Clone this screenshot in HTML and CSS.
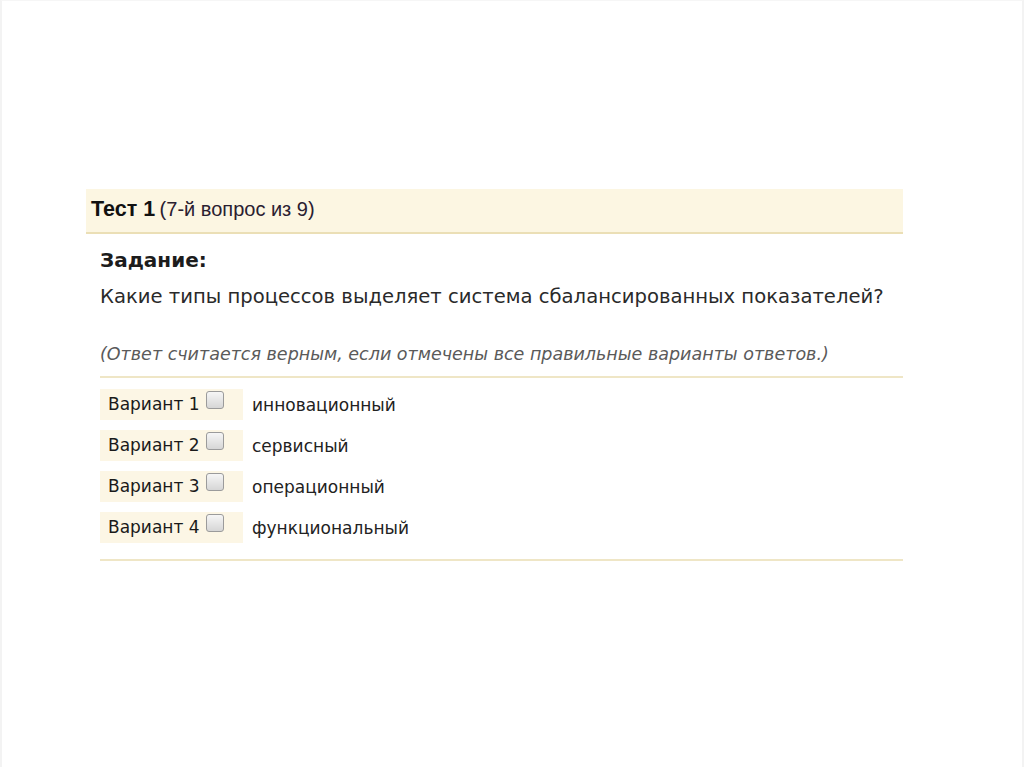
FILE: index.html
```html
<!DOCTYPE html>
<html lang="ru">
<head>
<meta charset="utf-8">
<title>Тест 1</title>
<link rel="stylesheet" href="styles.css">
</head>
<body>
<div class="frame">
  <div class="quiz">
    <div class="quiz-head"><b class="quiz-name">Тест 1</b> <span class="quiz-count">(7-й вопрос из 9)</span></div>
    <div class="quiz-body">
      <div class="task-title">Задание:</div>
      <div class="question">Какие типы процессов выделяет система сбалансированных показателей?</div>
      <div class="note">(Ответ считается верным, если отмечены все правильные варианты ответов.)</div>
      <div class="options">
        <div class="option"><div class="variant">Вариант 1 <span class="check"></span></div><div class="answer">инновационный</div></div>
        <div class="option"><div class="variant">Вариант 2 <span class="check"></span></div><div class="answer">сервисный</div></div>
        <div class="option"><div class="variant">Вариант 3 <span class="check"></span></div><div class="answer">операционный</div></div>
        <div class="option"><div class="variant">Вариант 4 <span class="check"></span></div><div class="answer">функциональный</div></div>
      </div>
    </div>
  </div>
</div>
</body>
</html>
```

FILE: styles.css
```css
html, body {
  margin: 0;
  padding: 0;
  background: #ffffff;
}

.frame {
  box-sizing: border-box;
  width: 1024px;
  height: 767px;
  border-left: 2px solid #f3f3f3;
  border-top: 1px solid #f6f6f6;
  border-right: 2px solid #f3f3f3;
  padding-top: 188px;
  padding-left: 84px;
  font-family: "DejaVu Sans", Verdana, sans-serif;
  color: #1c1c1c;
}

.quiz {
  width: 817px;
}

.quiz-head {
  height: 43px;
  background: #fcf6e2;
  border-bottom: 2px solid #ebdfb6;
  padding-left: 5px;
  font-family: "Liberation Sans", Arial, sans-serif;
  line-height: 41px;
  color: #111;
}

.quiz-name {
  font-size: 21.5px;
  font-weight: bold;
}

.quiz-count {
  font-size: 20px;
  color: #2a2030;
}

.quiz-body {
  padding-left: 14px;
}

.task-title {
  margin-top: 13px;
  font-size: 20px;
  font-weight: bold;
  line-height: 26px;
}

.question {
  margin-top: 11px;
  font-size: 19.6px;
  line-height: 26px;
  color: #2a2a2a;
}

.note {
  margin-top: 31px;
  font-size: 17.5px;
  font-style: italic;
  line-height: 26px;
  color: #5a5a5a;
  padding-bottom: 9px;
  border-bottom: 2px solid #efe6c6;
}

.options {
  display: flex;
  flex-direction: column;
  gap: 10px;
  padding-top: 11px;
  padding-bottom: 16px;
  border-bottom: 2px solid #efe6c6;
}

.option {
  display: flex;
  align-items: center;
  height: 31px;
}

.variant {
  box-sizing: border-box;
  width: 143px;
  height: 31px;
  background: #fcf6e5;
  padding-left: 8px;
  font-size: 17px;
  line-height: 31px;
  color: #1a1a1a;
  display: flex;
  align-items: flex-start;
  gap: 6px;
}

.check {
  box-sizing: border-box;
  display: inline-block;
  width: 18px;
  height: 18px;
  margin-top: 2px;
  border: 1px solid #9b9b9b;
  border-radius: 3px;
  background: linear-gradient(#f6f6f6, #d6d6d6);
}

.answer {
  margin-left: 9px;
  font-size: 17px;
  color: #222;
}
```
